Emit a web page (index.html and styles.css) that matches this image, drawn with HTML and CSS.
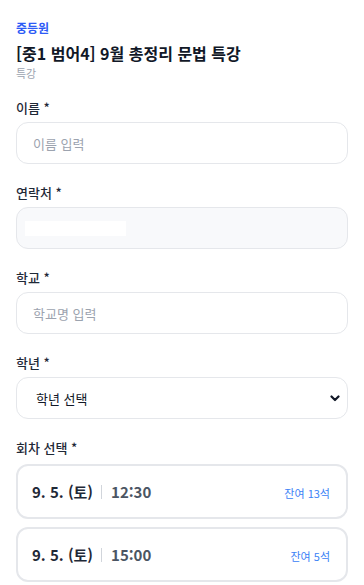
FILE: index.html
```html
<!DOCTYPE html>
<html lang="ko">
<head>
<meta charset="utf-8">
<link rel="stylesheet" href="styles.css">
</head>
<body>
<main class="page">
  <header class="head">
    <div class="brand">중등원</div>
    <h1 class="title">[중1 범어4] 9월 총정리 문법 특강</h1>
    <div class="sub">특강</div>
  </header>

  <div class="field">
    <label class="label">이름 *</label>
    <input class="input" type="text" placeholder="이름 입력">
  </div>

  <div class="field">
    <label class="label">연락처 *</label>
    <div class="input input-locked"><span class="mask"></span></div>
  </div>

  <div class="field">
    <label class="label">학교 *</label>
    <input class="input" type="text" placeholder="학교명 입력">
  </div>

  <div class="field">
    <label class="label">학년 *</label>
    <div class="select-wrap">
      <select class="input select">
        <option>학년 선택</option>
      </select>
      <svg class="chev" width="10" height="7" viewBox="0 0 10 7"><path d="M1.5 1.5 L5 5 L8.5 1.5" fill="none" stroke="#111827" stroke-width="2.2" stroke-linecap="round" stroke-linejoin="round"/></svg>
    </div>
  </div>

  <div class="field field-slots">
    <label class="label">회차 선택 *</label>
    <div class="slots">
      <div class="slot">
        <span class="date">9. 5. (토)</span>
        <span class="sep"></span>
        <span class="time">12:30</span>
        <span class="left">잔여 13석</span>
      </div>
      <div class="slot">
        <span class="date">9. 5. (토)</span>
        <span class="sep"></span>
        <span class="time">15:00</span>
        <span class="left">잔여 5석</span>
      </div>
    </div>
  </div>
</main>
</body>
</html>
```

FILE: styles.css
```css
* { box-sizing: border-box; }
html, body { margin: 0; padding: 0; background: #ffffff; }
body {
  font-family: "Noto Sans CJK KR", "Noto Sans", sans-serif;
  color: #111827;
}
.page {
  padding: 19px 16px 0;
  display: flex;
  flex-direction: column;
  gap: 19px;
}
.head { display: flex; flex-direction: column; margin-bottom: -2px; }
.brand {
  font-size: 12px; line-height: 18px; font-weight: 700; color: #2d5bf6;
}
.title {
  margin: 4px 0 0; font-size: 16px; line-height: 24px; font-weight: 700; color: #111827;
}
.sub { font-size: 11px; line-height: 16px; color: #9ca3af; margin-top: 0; }

.field { display: flex; flex-direction: column; gap: 4px; }
.field-slots { gap: 6px; }
.label { font-size: 13px; line-height: 20px; font-weight: 500; color: #1f2937; }
.input {
  height: 42px; width: 100%;
  border: 1px solid #e5e7eb; border-radius: 12px;
  background: #ffffff;
  padding: 0 16px;
  font-family: inherit; font-size: 13px; color: #111827;
  outline: none;
}
.input::placeholder { color: #9ca3af; }
.input-locked {
  background: #f8f9fb;
  display: flex; align-items: center;
  padding: 0 8px;
}
.mask { display: block; width: 101px; height: 15px; background: #ffffff; }
.select-wrap { position: relative; }
.select {
  appearance: none; -webkit-appearance: none;
  padding: 0 19px;
  color: #111827; font-size: 13px;
}
.chev { position: absolute; right: 8px; top: 18px; }

.slots { display: flex; flex-direction: column; gap: 8px; }
.slot {
  height: 55px;
  border: 2px solid #e5e7eb; border-radius: 12px;
  display: flex; align-items: center;
  padding: 0 16px 0 14px;
}
.date { font-size: 15px; font-weight: 700; color: #1f2937; }
.sep { width: 1px; height: 14px; background: #d1d5db; margin: 0 9px 0 8px; }
.time { font-size: 15px; font-weight: 700; color: #4b5563; }
.left { margin-left: auto; font-size: 11px; color: #3b82f6; padding-top: 3px; }
```
